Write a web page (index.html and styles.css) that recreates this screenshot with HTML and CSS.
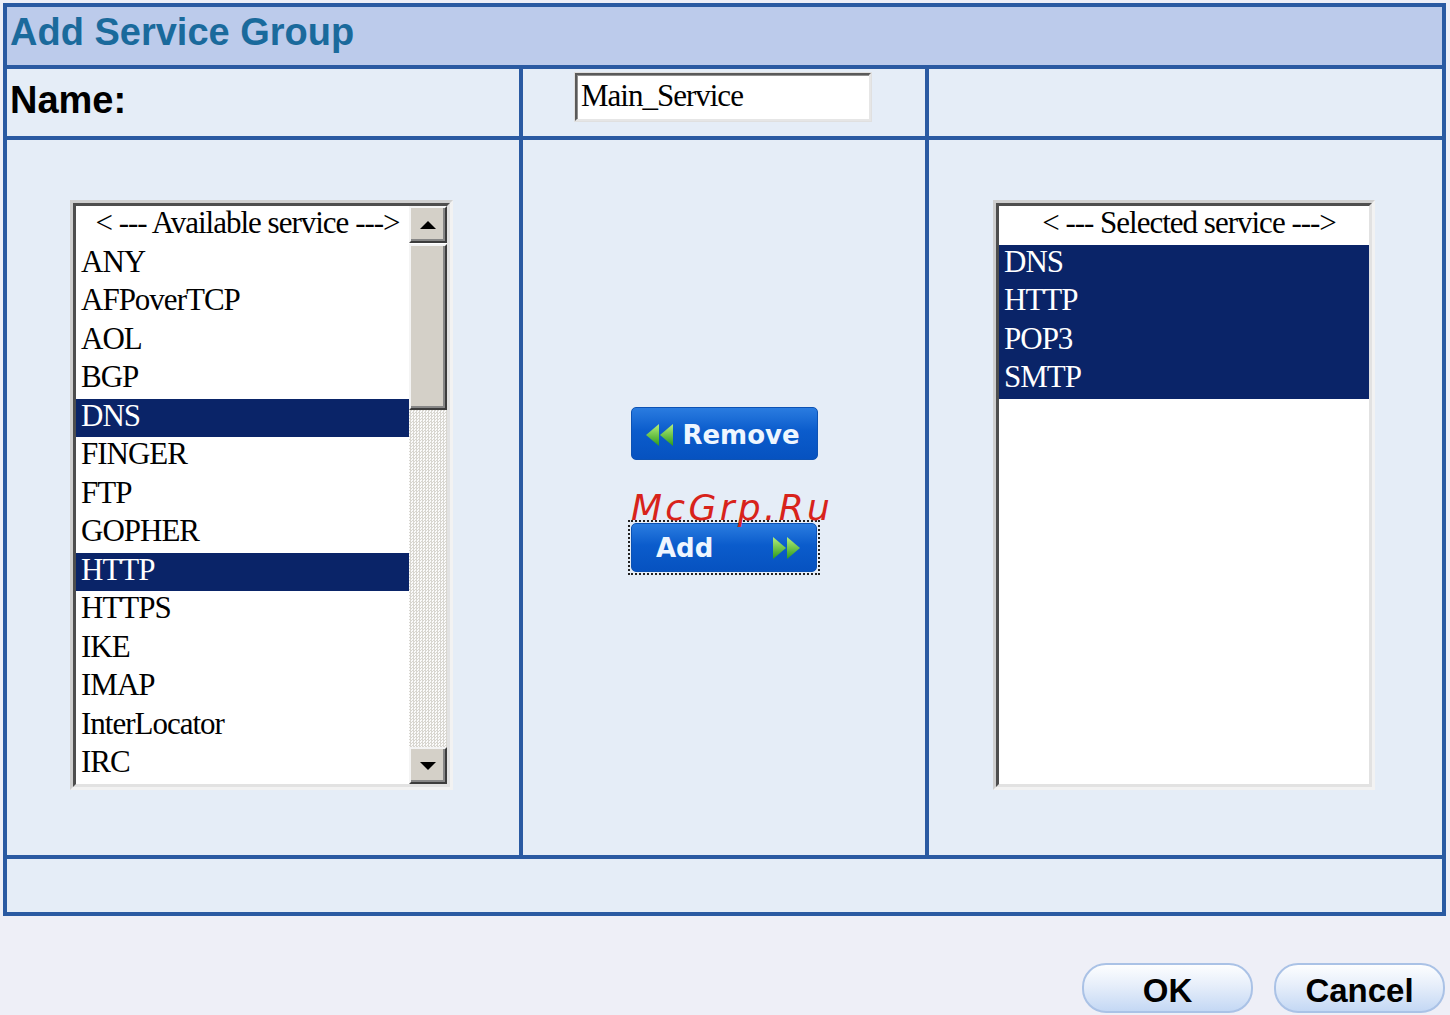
FILE: index.html
```html
<!DOCTYPE html>
<html lang="en">
<head>
    <meta charset="UTF-8">
    <meta name="viewport" content="width=device-width, initial-scale=1.0">
    <title>Add Service Group</title>
    <link rel="stylesheet" href="styles.css">
</head>
<body>
    <div class="form-table">
        <div class="cell title-cell">Add Service Group</div>

        <div class="cell name-label">Name:</div>
        <div class="cell name-field">
            <div class="text-input">Main_Service</div>
        </div>
        <div class="cell"></div>

        <div class="cell list-cell">
            <div class="listbox">
                <div class="listbox-inner">
                    <div class="list-items">
                        <div class="opt head">&lt; --- Available service ---&gt;</div>
                        <div class="opt">ANY</div>
                        <div class="opt">AFPoverTCP</div>
                        <div class="opt">AOL</div>
                        <div class="opt">BGP</div>
                        <div class="opt selected">DNS</div>
                        <div class="opt">FINGER</div>
                        <div class="opt">FTP</div>
                        <div class="opt">GOPHER</div>
                        <div class="opt selected">HTTP</div>
                        <div class="opt">HTTPS</div>
                        <div class="opt">IKE</div>
                        <div class="opt">IMAP</div>
                        <div class="opt">InterLocator</div>
                        <div class="opt">IRC</div>
                    </div>
                    <div class="scrollbar">
                        <div class="sb-btn"><span class="arrow-up"></span></div>
                        <div class="sb-thumb"></div>
                        <div class="sb-track"></div>
                        <div class="sb-btn"><span class="arrow-down"></span></div>
                    </div>
                </div>
            </div>
        </div>

        <div class="cell move-cell">
            <div class="move-btn">
                <svg width="32" height="28" viewBox="0 0 32 28">
                    <defs>
                        <linearGradient id="gl" x1="0" y1="0" x2="0" y2="1">
                            <stop offset="0" stop-color="#b6f07a"/>
                            <stop offset="1" stop-color="#2c9a1c"/>
                        </linearGradient>
                    </defs>
                    <polygon points="15,3 15,25 2,14" fill="url(#gl)"/>
                    <polygon points="29,3 29,25 16,14" fill="url(#gl)"/>
                </svg>
                <span>Remove</span>
            </div>
            <div class="focus-ring">
                <div class="move-btn add">
                    <span>Add</span>
                    <svg width="32" height="28" viewBox="0 0 32 28">
                        <defs>
                            <linearGradient id="gr" x1="0" y1="0" x2="0" y2="1">
                                <stop offset="0" stop-color="#b6f07a"/>
                                <stop offset="1" stop-color="#2c9a1c"/>
                            </linearGradient>
                        </defs>
                        <polygon points="3,3 3,25 16,14" fill="url(#gr)"/>
                        <polygon points="17,3 17,25 30,14" fill="url(#gr)"/>
                    </svg>
                </div>
            </div>
            <div class="watermark">McGrp.Ru</div>
        </div>

        <div class="cell list-cell right">
            <div class="listbox">
                <div class="listbox-inner">
                    <div class="list-items wide">
                        <div class="opt head">&lt; --- Selected service ---&gt;</div>
                        <div class="opt selected">DNS</div>
                        <div class="opt selected">HTTP</div>
                        <div class="opt selected">POP3</div>
                        <div class="opt selected">SMTP</div>
                    </div>
                </div>
            </div>
        </div>

        <div class="cell footer-cell"></div>
    </div>

    <div class="actions">
        <button class="pill">OK</button>
        <button class="pill">Cancel</button>
    </div>
</body>
</html>
```

FILE: styles.css
```css
body {
    margin: 0;
    padding: 3px 5px 0 3px;
    background: #eeeff7;
    font-family: 'Liberation Sans', Arial, sans-serif;
    overflow: hidden;
}

/* outer grid, the gaps show the blue rules between cells */
.form-table {
    display: grid;
    grid-template-columns: 512px 402px 513px;
    grid-template-rows: 58px 67px 715px 53px;
    gap: 4px;
    padding: 4px;
    background: #2a5aa2;
    width: 1435px;
}

.cell {
    background: #e5edf7;
}

.title-cell {
    grid-column: 1 / 4;
    background: #bccbeb;
    color: #1a6a9c;
    font-size: 38px;
    font-weight: bold;
    padding-left: 3px;
    line-height: 50px;
}

.name-label {
    font-size: 38px;
    font-weight: bold;
    color: #000;
    padding-left: 3px;
    line-height: 62px;
}

.name-field {
    padding: 4px 0 0 52px;
}

.text-input {
    width: 288px;
    height: 44px;
    background: #fff;
    border: 2px solid;
    border-color: #5a5a5a #e6e6e6 #e6e6e6 #5a5a5a;
    box-shadow: inset 1px 1px 0 #909090, 0 0 0 1px #e0e0e0;
    padding-left: 4px;
    font-family: 'Liberation Serif', 'Times New Roman', serif;
    font-size: 31px;
    letter-spacing: -1px;
    line-height: 42px;
}

.list-cell {
    padding: 60px 0 0 63px;
}

.list-cell.right {
    padding-left: 64px;
}

.listbox {
    display: inline-block;
    border: 3px solid;
    border-color: #cfcfcf #f2f2f2 #f2f2f2 #cfcfcf;
}

.listbox-inner {
    display: flex;
    border: 3px solid;
    border-color: #4e4e4e #e2e2e2 #e2e2e2 #4e4e4e;
    background: #fff;
}

.list-items {
    width: 333px;
    height: 578px;
    font-family: 'Liberation Serif', 'Times New Roman', serif;
    font-size: 31px;
    letter-spacing: -1px;
}

.list-items.wide {
    width: 370px;
}

.opt {
    height: 38.5px;
    line-height: 34px;
    padding-left: 5px;
    color: #000;
    white-space: nowrap;
}

.opt.head {
    text-align: center;
    padding-left: 10px;
}

.opt.selected {
    background: #0a2468;
    color: #fff;
}

.scrollbar {
    width: 38px;
    display: flex;
    flex-direction: column;
}

.sb-btn,
.sb-thumb {
    background: #d4d0c8;
    border: 2px solid;
    border-color: #f4f4f4 #3c3c3c #3c3c3c #f4f4f4;
    box-shadow: inset -2px -2px 0 #868686;
    box-sizing: border-box;
}

.sb-btn {
    height: 37px;
    display: flex;
    align-items: center;
    justify-content: center;
}

.sb-thumb {
    height: 166px;
    margin-top: 1px;
}

.sb-track {
    flex: 1;
    background: repeating-conic-gradient(#d8d6d0 0 25%, #fbfbfb 0 50%) 0 0 / 3px 3px;
}

.arrow-up {
    border-left: 8px solid transparent;
    border-right: 8px solid transparent;
    border-bottom: 8px solid #000;
}

.arrow-down {
    border-left: 8px solid transparent;
    border-right: 8px solid transparent;
    border-top: 8px solid #000;
}

/* middle column with the move buttons */
.move-cell {
    position: relative;
    display: flex;
    flex-direction: column;
    align-items: center;
    justify-content: center;
    padding-bottom: 13px;
}

.move-btn {
    width: 187px;
    height: 53px;
    box-sizing: border-box;
    display: flex;
    align-items: center;
    justify-content: center;
    gap: 6px;
    border: 1px solid #0c52b4;
    border-radius: 5px;
    background: linear-gradient(#2a7ce0, #0b5ccc 45%, #0652c0);
    color: #eef6ff;
    font-family: 'DejaVu Sans', Verdana, sans-serif;
    font-weight: bold;
    font-size: 26px;
    padding: 2px 4px 0 0;
}

.move-btn.add {
    justify-content: space-between;
    padding: 0 14px 0 24px;
    width: 186px;
    height: 49px;
}

.focus-ring {
    margin-top: 60px;
    padding: 1px;
    border: 2px dotted #222;
}

.watermark {
    position: absolute;
    left: 108px;
    top: 347px;
    font-family: 'DejaVu Sans', Verdana, sans-serif;
    font-style: italic;
    font-size: 36px;
    letter-spacing: 3.3px;
    color: #d8231b;
}

.footer-cell {
    grid-column: 1 / 4;
}

.actions {
    display: flex;
    justify-content: flex-end;
    gap: 21px;
    margin-top: 47px;
}

.pill {
    width: 171px;
    height: 50px;
    border: 2px solid #aac2e6;
    border-radius: 24px;
    background: linear-gradient(#fdfeff, #e6eefa 45%, #c4d8f4);
    font-family: 'Liberation Sans', Arial, sans-serif;
    font-weight: bold;
    font-size: 33px;
    color: #000;
    padding: 5px 0 0;
}
```
